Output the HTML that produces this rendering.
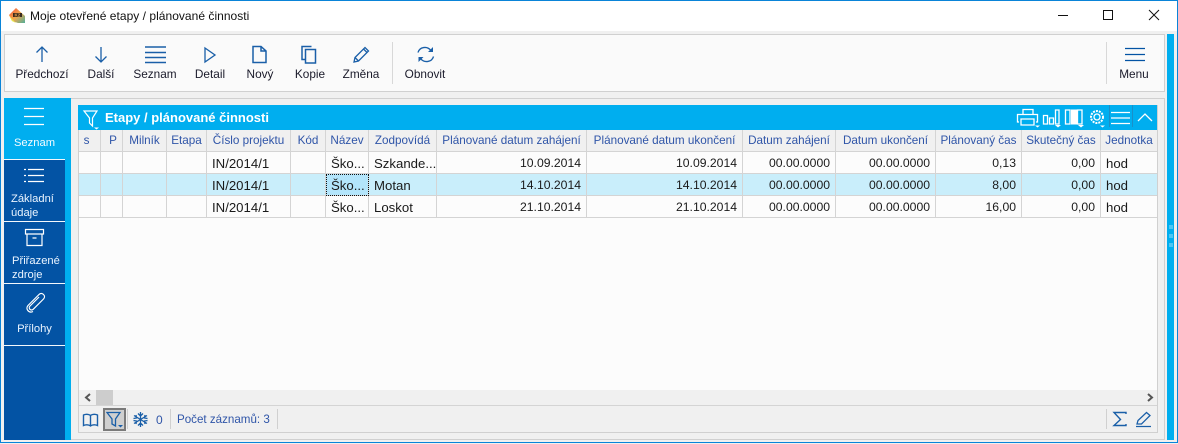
<!DOCTYPE html>
<html><head><meta charset="utf-8">
<style>
html,body{margin:0;padding:0}
body{width:1178px;height:444px;overflow:hidden;position:relative;background:#f0f0f0;font-family:"Liberation Sans",sans-serif;font-size:12px;color:#1a1a1a}
div,span,svg{position:absolute;box-sizing:border-box}
.t{white-space:nowrap;line-height:14px}
.tb{top:67px;width:80px;text-align:center;color:#1a1a2a;font-size:11.8px;white-space:nowrap;line-height:14px}
.s{stroke:#1a5fa8;fill:none;stroke-width:1.3}
.h{top:130px;height:22px;background:#f0f0f0;border-right:1px solid #d4d4d4;border-bottom:1px solid #d4d4d4;color:#2f55a8;line-height:22px;text-align:center;white-space:nowrap;font-size:11.7px}
.c{height:22px;border-right:1px solid #d4d4d4;border-bottom:1px solid #d4d4d4;line-height:23px;white-space:nowrap;padding:0 5px;font-size:13.2px;color:#1a1a1a;overflow:hidden}
.r{text-align:right;font-size:12.2px}
.side{left:4px;width:61px;color:#eaf4ff;font-size:11.2px;line-height:14px;border-bottom:1px solid #f4f8fc;background:#0353a4}
.w{stroke:#fff;fill:none;stroke-width:1.2}
</style></head><body>
<div style="left:0;top:0;width:1178px;height:443px;border:1px solid #0a84d8"></div>
<div style="left:1px;top:1px;width:1176px;height:30px;background:#fff"></div>
<svg style="left:9px;top:8px" width="17" height="16"><defs><linearGradient id="g" x1="0" y1="0" x2="1" y2="1"><stop offset="0" stop-color="#ee4a3c"/><stop offset=".5" stop-color="#f4a64a"/><stop offset="1" stop-color="#4fae9a"/></linearGradient></defs><polygon points="0,7 7,0 16,8 16,15 9,15 3,13" fill="url(#g)"/><polygon points="0,7 4,12 7,15 3,13" fill="#e8e84a"/><rect x="4" y="5" width="9" height="4" fill="#3a2a1e"/><text x="5.500" y="8.500" font-size="4.500" font-weight="bold" fill="#e8a04a" font-family="Liberation Sans">K2</text></svg>
<div class="t" style="left:30px;top:9px;color:#111;font-size:12px;letter-spacing:.03px">Moje otevřené etapy / plánované činnosti</div>
<svg style="left:1050px;top:6px" width="125" height="20" fill="none" stroke="#111" stroke-width="1"><path d="M8 9.500H18"/><rect x="53.500" y="4.500" width="9" height="9"/><path d="M99 4l10 10M109 4l-10 10"/></svg>

<div style="left:4px;top:34px;width:1161px;height:58px;background:#fafafa;border:1px solid #d0d0d0"></div>
<div style="left:392px;top:42px;width:1px;height:42px;background:#d8d8d8"></div>
<div style="left:1106px;top:42px;width:1px;height:42px;background:#d8d8d8"></div>

<svg style="left:30px;top:44px" width="24" height="20" class="s"><path d="M12 18V3M6.500 8.500L12 3l5.500 5.500"/></svg>
<svg style="left:89px;top:44px" width="24" height="20" class="s"><path d="M12 3v15M6.500 12.500L12 18l5.500-5.500"/></svg>
<svg style="left:144px;top:45px" width="24" height="20" stroke="#1a5fa8" fill="none" stroke-width="1.600"><path d="M1 2H22M1 7.500H22M1 12.500H22M1 17.500H22"/></svg>
<svg style="left:198px;top:46px" width="24" height="18" class="s"><path d="M7 2l10 7-10 7z"/></svg>
<svg style="left:250px;top:44px" width="20" height="20" stroke="#1a5fa8" fill="none" stroke-width="1.500"><path d="M3 2.500H11l5 4.500V18.500H3zM11 2.500V7h5"/></svg>
<svg style="left:299px;top:44px" width="20" height="20" stroke="#1a5fa8" fill="none" stroke-width="1.500"><path d="M12.500 2.500H3v13h3"/><rect x="6.500" y="5.500" width="10" height="13.500"/></svg>
<svg style="left:352px;top:45px" width="20" height="19" class="s"><path d="M2 17l1-4.500L13 2.500l3.500 3.500-10 10zM3 12.500L6.500 16M11.500 4l3.500 3.500"/></svg>
<svg style="left:416px;top:45px" width="20" height="19" stroke="#1a5fa8" fill="none" stroke-width="1.400"><path d="M2 7.500C3.500 2 11 .5 15 5.500M17.500 11.500C16 17 8.500 18.500 4.500 13.500"/><path d="M17 2v5h-5zM2.500 17v-5h5z" fill="#1a5fa8" stroke="none"/></svg>
<svg style="left:1124px;top:47px" width="22" height="16" stroke="#0353a4" fill="none" stroke-width="1.300"><path d="M1 1.500H21M1 7.500H21M1 13.500H21"/></svg>

<div class="tb" style="left:2px">Předchozí</div>
<div class="tb" style="left:61px">Další</div>
<div class="tb" style="left:115px">Seznam</div>
<div class="tb" style="left:170px">Detail</div>
<div class="tb" style="left:220px">Nový</div>
<div class="tb" style="left:270px">Kopie</div>
<div class="tb" style="left:321px">Změna</div>
<div class="tb" style="left:385px">Obnovit</div>
<div class="tb" style="left:1094px">Menu</div>

<div style="left:1167px;top:34px;width:7px;height:406px;background:#00aeef"></div>
<div style="left:1169px;top:225px;width:4px;height:4px;background:#4cc6f4"></div>
<div style="left:1169px;top:234px;width:4px;height:4px;background:#4cc6f4"></div>
<div style="left:1169px;top:243px;width:4px;height:4px;background:#4cc6f4"></div>

<div style="left:4px;top:98px;width:67px;height:342px;background:#00aeef"></div>
<div style="left:4px;top:159px;width:61px;height:281px;background:#0353a4"></div>
<div class="side" style="top:98px;height:62px;background:#00aeef"><div class="t" style="left:0;width:61px;text-align:center;top:38px;color:#f4fbff">Seznam</div>
<svg style="left:20px;top:8px" width="22" height="20" class="w"><path d="M0 2.500H20M0 10.500H20M0 18.500H20"/></svg></div>
<div class="side" style="top:160px;height:62px"><svg style="left:20px;top:6px" width="22" height="18" class="w"><path d="M4 3.500H20M4 9.500H20M4 15.500H20M0 3.500H2M0 9.500H2M0 15.500H2"/></svg>
<div class="t" style="left:7px;top:32px">Základní<br>údaje</div></div>
<div class="side" style="top:222px;height:62px"><svg style="left:20px;top:6px" width="22" height="19" class="w"><path d="M1.500 1.500H19.500V6H1.500zM3 6V17.500H18V6M8.500 10H12.500"/></svg>
<div class="t" style="left:8px;top:32px">Přiřazené<br>zdroje</div></div>
<div class="side" style="top:284px;height:62px"><svg style="left:21px;top:7px" width="22" height="22" class="w"><path d="M14 6L5 15c-2.200 2.200 1 5.500 3.200 3.300L18.500 8c3-3-1.500-7.500-4.500-4.500L3 14.500c-3 3.500 1 8 5 6"/></svg>
<div class="t" style="left:0;width:61px;text-align:center;top:38px">Přílohy</div></div>

<div style="left:71px;top:98px;width:1094px;height:342px;border:1px solid #d0d0d0;border-left:0;background:#f0f0f0"></div>
<div style="left:78px;top:105px;width:1080px;height:328px;border:1px solid #d0d0d0;border-top:0;border-left-width:1px;background:#f0f0f0"></div>
<div style="left:78px;top:105px;width:1079px;height:25px;background:#00aeef"></div>
<div style="left:79px;top:130px;width:1078px;height:260px;background:#fcfcfc"></div>
<svg style="left:82px;top:109px" width="20" height="21" fill="none" stroke="#fff" stroke-width="1.200"><path d="M2 2H15L10.500 9V17L7.500 14V9z"/><path d="M12 18.500h5l-2.500 2z" fill="#fff" stroke="none"/></svg>
<div class="t" style="left:105px;top:111px;color:#fff;font-weight:bold;font-size:13px">Etapy / plánované činnosti</div>

<svg style="left:1016px;top:107px" width="141" height="22" fill="none" stroke="#fff" stroke-width="1.300">
<path d="M7 7V2.500H17V7M3 15H1.500V7.500H21.500V15H20M5 12H18V18H5z"/><path d="M19 18.500h5l-2.500 2z" fill="#fff" stroke="none"/>
<path d="M27.500 8.500H31.500V17H27.500zM33.500 11H37.500V17H33.500zM39.500 3H43V17H39.500z"/><path d="M39 18h6l-3 2.500z" fill="#fff" stroke="none"/>
<path d="M49.500 3H54V17H49.500zM61.500 3H66V17H61.500z"/><rect x="55" y="2.500" width="6" height="15" fill="#fff" stroke="none"/><path d="M62 18h6l-3 2.500z" fill="#fff" stroke="none"/>
<circle cx="81" cy="10" r="6" stroke-width="2" stroke-dasharray="2 1"/><circle cx="81" cy="10" r="3"/><path d="M84 18.500h5l-2.500 2z" fill="#fff" stroke="none"/>
<path d="M95 5.500H114M95 11H114M95 16.500H114"/><path d="M122 14l7-7 7 7" stroke-width="1.300"/>
</svg>
<div style="left:1109px;top:105px;width:1px;height:22px;background:#1a8fc8"></div>
<div style="left:1132px;top:105px;width:1px;height:22px;background:#1a8fc8"></div>

<div class="h" style="left:79px;width:22px;padding-right:6px">s</div>
<div class="h" style="left:101px;width:22px;padding-left:3px">P</div>
<div class="h" style="left:123px;width:44px">Milník</div>
<div class="h" style="left:167px;width:40px">Etapa</div>
<div class="h" style="left:207px;width:84px">Číslo projektu</div>
<div class="h" style="left:291px;width:35px">Kód</div>
<div class="h" style="left:326px;width:43px">Název</div>
<div class="h" style="left:369px;width:68px">Zodpovídá</div>
<div class="h" style="left:437px;width:150px">Plánované datum zahájení</div>
<div class="h" style="left:587px;width:156px">Plánované datum ukončení</div>
<div class="h" style="left:743px;width:93px">Datum zahájení</div>
<div class="h" style="left:836px;width:100px">Datum ukončení</div>
<div class="h" style="left:936px;width:86px">Plánovaný čas</div>
<div class="h" style="left:1022px;width:79px">Skutečný čas</div>
<div class="h" style="left:1101px;width:56px;border-right:0">Jednotka</div>

<div style="left:79px;top:174px;width:1078px;height:22px;background:#c9eefb"></div>

<div class="c" style="left:79px;top:152px;width:22px"></div><div class="c" style="left:101px;top:152px;width:22px"></div><div class="c" style="left:123px;top:152px;width:44px"></div><div class="c" style="left:167px;top:152px;width:40px"></div>
<div class="c" style="left:207px;top:152px;width:84px">IN/2014/1</div><div class="c" style="left:291px;top:152px;width:35px"></div><div class="c" style="left:326px;top:152px;width:43px">Ško...</div><div class="c" style="left:369px;top:152px;width:68px">Szkande...</div>
<div class="c r" style="left:437px;top:152px;width:150px">10.09.2014</div><div class="c r" style="left:587px;top:152px;width:156px">10.09.2014</div><div class="c r" style="left:743px;top:152px;width:93px">00.00.0000</div><div class="c r" style="left:836px;top:152px;width:100px">00.00.0000</div><div class="c r" style="left:936px;top:152px;width:86px">0,13</div><div class="c r" style="left:1022px;top:152px;width:79px">0,00</div><div class="c" style="left:1101px;top:152px;width:56px;border-right:0">hod</div>

<div class="c" style="left:79px;top:174px;width:22px"></div><div class="c" style="left:101px;top:174px;width:22px"></div><div class="c" style="left:123px;top:174px;width:44px"></div><div class="c" style="left:167px;top:174px;width:40px"></div>
<div class="c" style="left:207px;top:174px;width:84px">IN/2014/1</div><div class="c" style="left:291px;top:174px;width:35px"></div><div class="c" style="left:326px;top:174px;width:43px;background:#b3e5fb;outline:1px dotted #111;outline-offset:-1px">Ško...</div><div class="c" style="left:369px;top:174px;width:68px">Motan</div>
<div class="c r" style="left:437px;top:174px;width:150px">14.10.2014</div><div class="c r" style="left:587px;top:174px;width:156px">14.10.2014</div><div class="c r" style="left:743px;top:174px;width:93px">00.00.0000</div><div class="c r" style="left:836px;top:174px;width:100px">00.00.0000</div><div class="c r" style="left:936px;top:174px;width:86px">8,00</div><div class="c r" style="left:1022px;top:174px;width:79px">0,00</div><div class="c" style="left:1101px;top:174px;width:56px;border-right:0">hod</div>

<div class="c" style="left:79px;top:196px;width:22px"></div><div class="c" style="left:101px;top:196px;width:22px"></div><div class="c" style="left:123px;top:196px;width:44px"></div><div class="c" style="left:167px;top:196px;width:40px"></div>
<div class="c" style="left:207px;top:196px;width:84px">IN/2014/1</div><div class="c" style="left:291px;top:196px;width:35px"></div><div class="c" style="left:326px;top:196px;width:43px">Ško...</div><div class="c" style="left:369px;top:196px;width:68px">Loskot</div>
<div class="c r" style="left:437px;top:196px;width:150px">21.10.2014</div><div class="c r" style="left:587px;top:196px;width:156px">21.10.2014</div><div class="c r" style="left:743px;top:196px;width:93px">00.00.0000</div><div class="c r" style="left:836px;top:196px;width:100px">00.00.0000</div><div class="c r" style="left:936px;top:196px;width:86px">16,00</div><div class="c r" style="left:1022px;top:196px;width:79px">0,00</div><div class="c" style="left:1101px;top:196px;width:56px;border-right:0">hod</div>

<div style="left:79px;top:390px;width:1078px;height:15px;background:#f0f0f0"></div>
<div style="left:96px;top:390px;width:17px;height:15px;background:#cdcdcd"></div>
<svg style="left:84px;top:392px" width="1072" height="11" fill="none" stroke="#555" stroke-width="2"><path d="M6 2L2 5.500l4 3.500M1064 2l4 3.500-4 3.500"/></svg>

<div style="left:79px;top:405px;width:1078px;height:1px;background:#d4d4d4"></div>
<svg style="left:82px;top:412px" width="18" height="16" stroke="#1a5fa8" fill="none" stroke-width="1.400"><path d="M8.500 3.500C6.500 2 3.500 2 1.500 3v10.500c2-1 5-1 7 .500 2-1.500 5-1.500 7-.500V3c-2-1-5-1-7 .500zM8.500 3.500V14"/></svg>
<div style="left:103px;top:408px;width:23px;height:23px;background:#cfcfcf;border:2px solid #7a7a7a"></div>
<svg style="left:106px;top:411px" width="18" height="18" fill="none" stroke="#1a5fa8" stroke-width="1.300"><path d="M1 1.500H14L9.500 8V15L6 13V8z"/><path d="M12 14h5l-2.500 2.500z" fill="#1a5fa8" stroke="none"/></svg>
<div style="left:127px;top:409px;width:1px;height:20px;background:#d0d0d0"></div>
<svg style="left:132px;top:411px" width="18" height="18" stroke="#1a5fa8" fill="none" stroke-width="1.300"><path d="M8.500 1V16M2 4.500L15 12.500M15 4.500L2 12.500M6 2.500L8.500 5 11 2.500M6 14.500L8.500 12 11 14.500M1.500 7.500L4.500 7 4 4M15.500 7.500L12.500 7 13 4M1.500 9.500L4.500 10 4 13M15.500 9.500L12.500 10 13 13"/></svg>
<div class="t" style="left:156px;top:413px;color:#2f55a8">0</div>
<div style="left:170px;top:409px;width:1px;height:20px;background:#d0d0d0"></div>
<div class="t" style="left:177px;top:413px;color:#2f55a8;font-size:11.600px">Počet záznamů: 3</div>
<div style="left:277px;top:409px;width:1px;height:20px;background:#d0d0d0"></div>
<div style="left:1106px;top:409px;width:1px;height:20px;background:#d0d0d0"></div>
<svg style="left:1112px;top:411px" width="16" height="17" stroke="#1a5fa8" fill="none" stroke-width="1.400"><path d="M14 3V1.500H2L8.500 8.500 2 14.500H14V13"/></svg>
<svg style="left:1135px;top:411px" width="18" height="18" class="s"><path d="M2 13l1-3.500L11.500 1.500l3.500 3-8.500 8.500zM1 15.500H16"/></svg>
</body></html>
